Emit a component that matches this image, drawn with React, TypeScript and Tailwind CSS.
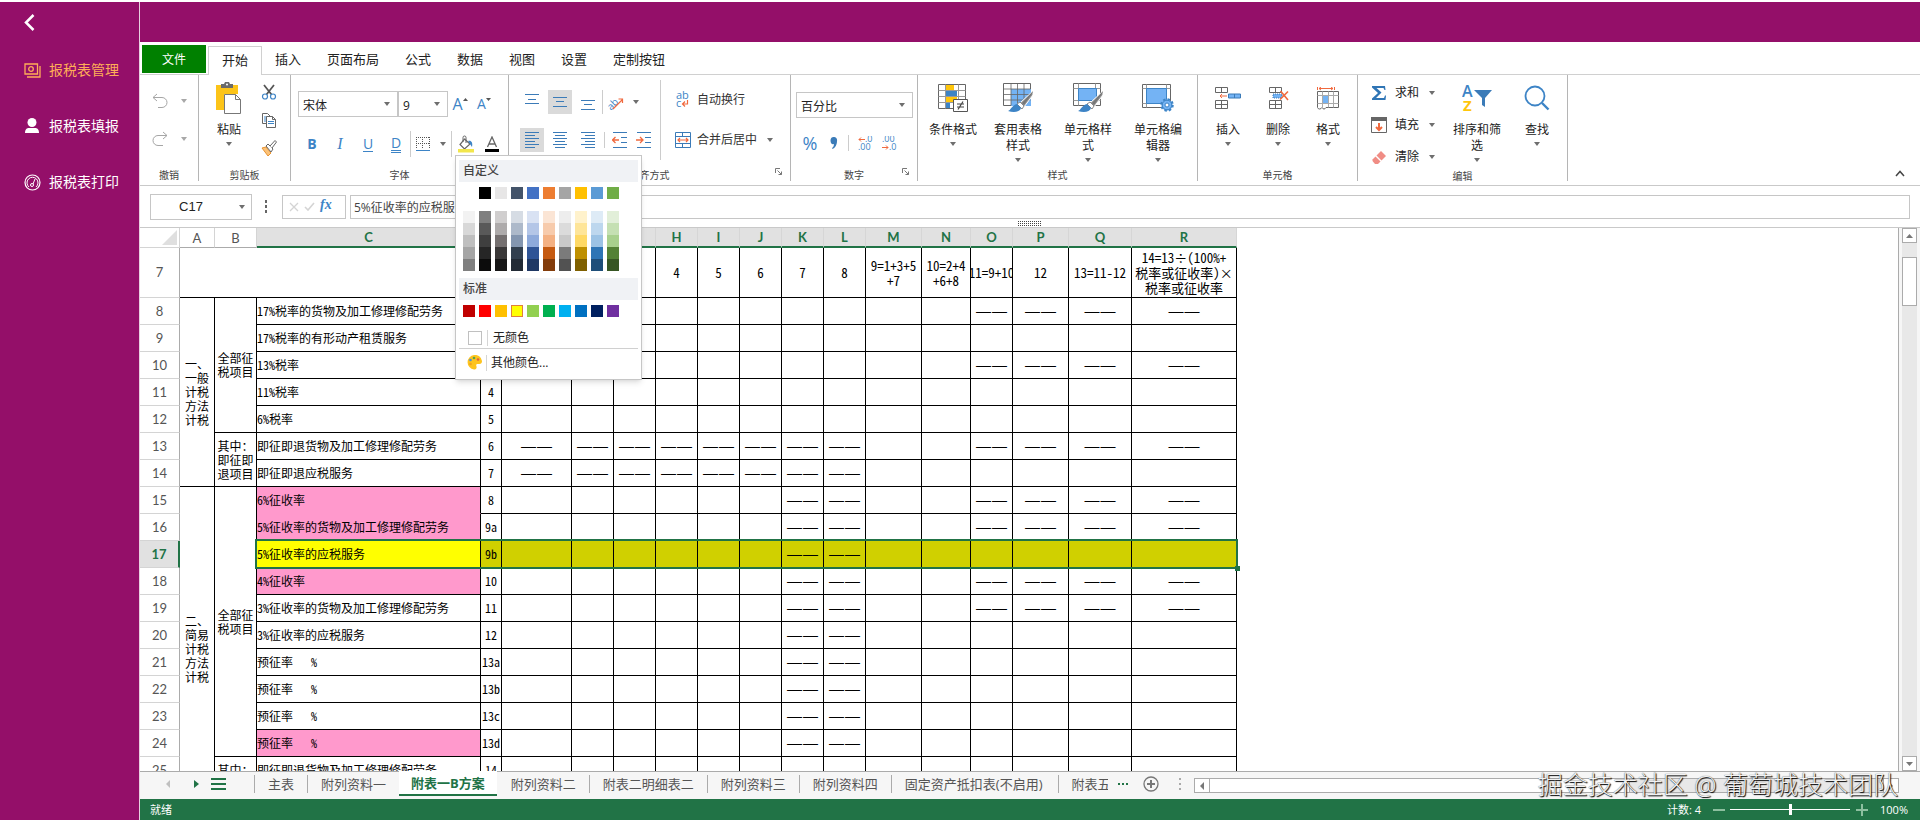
import React from 'react';
import clsx from 'clsx';

const THEME = ['#ffffff', '#000000', '#e7e6e6', '#44546a', '#4472c4', '#ed7d31', '#a5a5a5', '#ffc000', '#5b9bd5', '#70ad47'];

const TINTS = [
  ['#f2f2f2', '#7f7f7f', '#d0cece', '#d6dce4', '#d9e2f3', '#fbe5d5', '#ededed', '#fff2cc', '#deebf6', '#e2efd9'],
  ['#d8d8d8', '#595959', '#aeabab', '#adb9ca', '#b4c6e7', '#f7cbac', '#dbdbdb', '#fee599', '#bdd7ee', '#c5e0b3'],
  ['#bfbfbf', '#3f3f3f', '#757070', '#8496b0', '#8eaadb', '#f4b183', '#c9c9c9', '#ffd965', '#9cc3e5', '#a8d08d'],
  ['#a5a5a5', '#262626', '#3a3838', '#323f4f', '#2f5496', '#c55a11', '#7b7b7b', '#bf9000', '#2e75b5', '#538135'],
  ['#7f7f7f', '#0c0c0c', '#171616', '#222a35', '#1f3864', '#833c0b', '#525252', '#7f6000', '#1e4e79', '#375623'],
];

const STANDARD = ['#c00000', '#ff0000', '#ffc000', '#ffff00', '#92d050', '#00b050', '#00b0f0', '#0070c0', '#002060', '#7030a0'];

const COLUMNS = [
  { id: 'A', width: 35 },
  { id: 'B', width: 42 },
  { id: 'C', width: 224 },
  { id: 'D', width: 21 },
  { id: 'E', width: 70 },
  { id: 'F', width: 42 },
  { id: 'G', width: 42 },
  { id: 'H', width: 42 },
  { id: 'I', width: 42 },
  { id: 'J', width: 42 },
  { id: 'K', width: 42 },
  { id: 'L', width: 42 },
  { id: 'M', width: 56 },
  { id: 'N', width: 49 },
  { id: 'O', width: 42 },
  { id: 'P', width: 56 },
  { id: 'Q', width: 63 },
  { id: 'R', width: 105 },
];

const VALUE_COLUMNS = 'EFGHIJKLMNOPQR'.split('');

const FORMULAS = [
  ['1'], ['2'], ['3'], ['4'], ['5'], ['6'], ['7'], ['8'],
  ['9=1+3+5', '+7'],
  ['10=2+4', '+6+8'],
  ['11=9+10'],
  ['12'],
  ['13=11-12'],
  ['14=13÷(100%+', '税率或征收率)×', '税率或征收率'],
];

interface SheetRow {
  n: number;
  label: string;
  code: string;
  dashes: string;
  fill?: 'pink' | 'open' | 'selected';
  a?: { lines: string[]; span: number };
  b?: { lines: string[]; span: number };
}

const ROWS: SheetRow[] = [
  {
    n: 8, label: '17%税率的货物及加工修理修配劳务', code: '1', dashes: 'OPQR',
    a: { lines: ['一、', '一般', '计税', '方法', '计税'], span: 7 },
    b: { lines: ['全部征', '税项目'], span: 5 },
  },
  { n: 9, label: '17%税率的有形动产租赁服务', code: '2', dashes: '' },
  { n: 10, label: '13%税率', code: '3', dashes: 'OPQR' },
  { n: 11, label: '11%税率', code: '4', dashes: '' },
  { n: 12, label: '6%税率', code: '5', dashes: '' },
  {
    n: 13, label: '即征即退货物及加工修理修配劳务', code: '6', dashes: 'EFGHIJKLOPQR',
    b: { lines: ['其中：', '即征即', '退项目'], span: 2 },
  },
  { n: 14, label: '即征即退应税服务', code: '7', dashes: 'EFGHIJKL' },
  {
    n: 15, label: '6%征收率', code: '8', dashes: 'KLOPQR', fill: 'open',
    a: { lines: ['二、', '简易', '计税', '方法', '计税'], span: 12 },
    b: { lines: ['全部征', '税项目'], span: 10 },
  },
  { n: 16, label: '5%征收率的货物及加工修理修配劳务', code: '9a', dashes: 'KLOPQR', fill: 'pink' },
  { n: 17, label: '5%征收率的应税服务', code: '9b', dashes: 'KL', fill: 'selected' },
  { n: 18, label: '4%征收率', code: '10', dashes: 'KLOPQR', fill: 'pink' },
  { n: 19, label: '3%征收率的货物及加工修理修配劳务', code: '11', dashes: 'KLOPQR' },
  { n: 20, label: '3%征收率的应税服务', code: '12', dashes: 'KL' },
  { n: 21, label: '预征率   %', code: '13a', dashes: 'KL' },
  { n: 22, label: '预征率   %', code: '13b', dashes: 'KL' },
  { n: 23, label: '预征率   %', code: '13c', dashes: 'KL' },
  { n: 24, label: '预征率   %', code: '13d', dashes: 'KL', fill: 'pink' },
  {
    n: 25, label: '即征即退货物及加工修理修配劳务', code: '14', dashes: 'EFGHIJKLOPQR',
    b: { lines: ['其中：', '即征即', '退项目'], span: 2 },
  },
  { n: 26, label: '即征即退应税服务', code: '15', dashes: 'EFGHIJKLOPQR' },
];

const SHEETS = ['主表', '附列资料一', '附表一B方案', '附列资料二', '附表二明细表二', '附列资料三', '附列资料四', '固定资产抵扣表(不启用)'];

const MENU_TABS = ['开始', '插入', '页面布局', '公式', '数据', '视图', '设置', '定制按钮'];

/* ---------- icons ---------- */

const Caret = ({ light = false }: { light?: boolean }) => (
  <svg width="6" height="4" viewBox="0 0 6 4" className="shrink-0">
    <path d="M0 0h6L3 4z" fill={light ? '#a8a8a8' : '#6e6e6e'} />
  </svg>
);

const UndoIcon = ({ flip = false }: { flip?: boolean }) => (
  <svg width="16" height="16" viewBox="0 0 16 16" fill="none" stroke="#a6a6a6">
    {flip ? (
      <path d="M11 1l4 3.500-4 3.500M15 4.500H6a5 5 0 0 0 0 10h5" />
    ) : (
      <path d="M5 1L1 4.500 5 8M1 4.500h9a5 5 0 0 1 0 10H6" />
    )}
  </svg>
);

const PasteIcon = () => (
  <svg width="26" height="32" viewBox="0 0 26 32">
    <path d="M0 3h22v9H8v16H0z" fill="#fcc419" />
    <path d="M5 2h3l1-2h4l1 2h3v4H5z" fill="#6b6b6b" />
    <circle cx="11" cy="2.500" r="1" fill="#fff" />
    <path d="M8.500 12.500h11l5 5v14h-16z" fill="#fff" stroke="#777" />
    <path d="M19.500 12.500v5h5" fill="none" stroke="#777" />
  </svg>
);

const CutIcon = () => (
  <svg width="16" height="16" viewBox="0 0 16 16" fill="none">
    <path d="M3 1l7.500 9.500M13 1L5.500 10.500" stroke="#555" strokeWidth="1.800" />
    <circle cx="4" cy="12.500" r="2.500" stroke="#3d84c6" strokeWidth="1.200" />
    <circle cx="12" cy="12.500" r="2.500" stroke="#3d84c6" strokeWidth="1.200" />
  </svg>
);

const CopyIcon = () => (
  <svg width="16" height="16" viewBox="0 0 16 16">
    <path d="M1.500 1.500h5l3 3v7h-8z" fill="#fff" stroke="#666" />
    <path d="M3 5h3M3 7h2M3 9h2" stroke="#3d84c6" />
    <path d="M5.500 4.500h6l3 3v8h-9z" fill="#fff" stroke="#666" />
    <path d="M11.500 4.500v3h3" fill="none" stroke="#666" />
    <path d="M7 9.500h6M7 11.500h6" stroke="#3d84c6" />
  </svg>
);

const BrushIcon = () => (
  <svg width="16" height="16" viewBox="0 0 16 16">
    <path d="M1 8l4-1 5 6-3 3z" fill="#fbc27a" stroke="#e8932f" />
    <path d="M5 6l2-2 5 5-2 3z" fill="#fff" stroke="#666" />
    <path d="M9 6l5-5.500 1.500 1.500L11 8" fill="#fff" stroke="#666" />
  </svg>
);

const BordersIcon = () => (
  <svg width="14" height="14" viewBox="0 0 14 14">
    <path d="M0 .5h14M0 6.500h14M.5 0v12M6.500 0v12M13.500 0v12" stroke="#555" strokeDasharray="1 1" fill="none" />
    <path d="M0 13.500h14" stroke="#3d84c6" />
  </svg>
);

const FillIcon = () => (
  <svg width="16" height="18" viewBox="0 0 16 18">
    <path d="M6.500 4L12 9l-5.500 5L2 9.500z" fill="#fff" stroke="#666" strokeWidth="1.200" />
    <path d="M5 7V2.500a1.500 1.500 0 0 1 3 0V8" fill="none" stroke="#666" />
    <path d="M10 6c3-1 5 1 4 6l-2-3z" fill="#3d84c6" />
    <path d="M0 14h16v3.500H0z" fill="#f2e64b" />
  </svg>
);

const FontColorIcon = () => (
  <svg width="14" height="17" viewBox="0 0 14 17">
    <path d="M2.500 11L7 1l4.500 10M4 8h6" fill="none" stroke="#666" strokeWidth="1.300" />
    <path d="M0 13h14v3H0z" fill="#000" />
  </svg>
);

const LINES: Record<string, string> = {
  top: 'M0 .5h14M3 5.500h8M0 9.500h14',
  middle: 'M0 3.500h14M3 7.500h8M0 12.500h14',
  bottom: 'M0 6.500h14M3 10.500h8M0 15.500h14',
  left: 'M0 .5h14M0 3.500h10M0 6.500h14M0 9.500h10M0 12.500h14M0 15.500h10',
  center: 'M0 .5h14M2 3.500h10M0 6.500h14M2 9.500h10M0 12.500h14M2 15.500h10',
  right: 'M0 .5h14M4 3.500h10M0 6.500h14M4 9.500h10M0 12.500h14M4 15.500h10',
};

const LinesIcon = ({ kind }: { kind: string }) => (
  <svg width="14" height="16" viewBox="0 0 14 16">
    <path d={LINES[kind]} stroke="#3b7bb8" fill="none" />
  </svg>
);

const IndentIcon = ({ inward = false }: { inward?: boolean }) => (
  <svg width="15" height="16" viewBox="0 0 15 16" fill="none">
    <path d="M1 .5h14M9 5.500h6M9 10.500h6M1 15.500h14" stroke="#3b7bb8" />
    <path d={inward ? 'M0 8h6M4 5l3 3-3 3' : 'M1 8h6M3.500 5L.5 8l3 3'} stroke="#f0693e" strokeWidth="1.300" />
  </svg>
);

const OrientationIcon = () => (
  <svg width="16" height="16" viewBox="0 0 16 16">
    <text x="-2" y="13" fontSize="10" fill="#3d84c6" fontFamily="Open Sans, sans-serif" transform="rotate(-45 5 9)">ab</text>
    <path d="M5 15L14.500 5.500M10.500 5h4v4" stroke="#f0693e" fill="none" strokeWidth="1.200" />
  </svg>
);

const WrapIcon = () => (
  <svg width="16" height="18" viewBox="0 0 16 18">
    <text x="1" y="8" fontSize="11" fill="#3d84c6" fontFamily="Open Sans, sans-serif">ab</text>
    <text x="1" y="16" fontSize="11" fill="#3d84c6" fontFamily="Open Sans, sans-serif">c</text>
    <path d="M12.500 9v4H8M10 10.500L7.500 13l2.500 2.500" stroke="#f0693e" fill="none" strokeWidth="1.200" />
  </svg>
);

const MergeIcon = () => (
  <svg width="16" height="16" viewBox="0 0 16 16" fill="none">
    <path d="M.5 .5h15v15H.5zM.5 4.500h15M.5 11.500h15M7.500 .5v4M7.500 11.500v4" stroke="#3b7bb8" />
    <path d="M3 8h10M5 6L3 8l2 2M11 6l2 2-2 2" stroke="#f0693e" strokeWidth="1.200" />
  </svg>
);

const DecimalIcon = ({ less = false }: { less?: boolean }) => (
  <svg width="15" height="15" viewBox="0 0 15 15" fontSize="9" fontFamily="Open Sans, sans-serif" fill="#3d84c6">
    <text x={less ? 0 : 7} y="6">{less ? '.00' : '.0'}</text>
    <text x={less ? 7 : 0} y="14">{less ? '.0' : '.00'}</text>
    <path
      d={less ? 'M0 11.500h6M4 9.500l2 2-2 2' : 'M1 3.500h6M3 1.500l-2 2 2 2'}
      stroke="#f0693e"
      fill="none"
    />
  </svg>
);

const ConditionalIcon = () => (
  <svg width="30" height="30" viewBox="0 0 30 30">
    <path d="M.5 1.500h27v24H.5z" fill="#fff" stroke="#666" />
    <path d="M.5 7.500h27M.5 13.500h27M.5 19.500h27M7.500 1.500v24M20.500 1.500v24" stroke="#999" />
    <path d="M8 2h8v5H8zM8 14h11v5H8z" fill="#ffc60b" />
    <path d="M8 8h11v5H8zM8 20h4v5H8z" fill="#3d84c6" />
    <path d="M15.500 16.500h14v12h-14z" fill="#fff" stroke="#555" />
    <path d="M19 21h7M19 24h7M25 18.500l-5 8" stroke="#444" strokeWidth="1.200" />
  </svg>
);

const PaintBrush = () => (
  <>
    <path d="M30 8L17 20l4 4 9-12z" fill="#999" stroke="#fff" />
    <path d="M30 8L19 20l2 2 8-11z" fill="#777" />
    <path d="M17 19l4 4-2 3-5-5z" fill="#fff" stroke="#888" />
    <path d="M14 21l4 4c-1 4-7 5-13 3 3-1 4-6 9-7z" fill="#3d84c6" />
  </>
);

const TableStyleIcon = () => (
  <svg width="30" height="30" viewBox="0 0 30 30">
    <path d="M.5 .5h27v22H.5z" fill="#fff" stroke="#666" />
    <path d="M8 6h20v17H8z" fill="#74b3f4" />
    <path d="M.5 6h27M.5 11.500h27M.5 17h27M8 .5v22M14.500 .5v22M21 .5v22" stroke="#666" strokeWidth=".8" />
    <PaintBrush />
  </svg>
);

const CellStyleIcon = () => (
  <svg width="30" height="30" viewBox="0 0 30 30">
    <path d="M.5 .5h27v22H.5z" fill="#fff" stroke="#666" />
    <path d="M.5 5.500h27M.5 17.500h27M5.500 .5v22M22.500 .5v22" stroke="#999" />
    <path d="M5.500 5.500h18v12h-18z" fill="#74b3f4" stroke="#3d84c6" />
    <PaintBrush />
  </svg>
);

const CellEditorIcon = () => (
  <svg width="32" height="30" viewBox="0 0 32 30">
    <path d="M.5 1.500h28v23H.5z" fill="#fff" stroke="#666" />
    <path d="M.5 5.500h28M.5 20.500h28M4.500 1.500v23M24.500 1.500v23" stroke="#999" />
    <path d="M4.500 5.500h20v15h-20z" fill="#74b3f4" stroke="#3d84c6" />
    <circle cx="25" cy="22" r="5.500" fill="#74b3f4" stroke="#3d84c6" strokeWidth="2.500" strokeDasharray="2.300 2" />
    <circle cx="25" cy="22" r="4.800" fill="#74b3f4" stroke="#3d84c6" />
    <circle cx="25" cy="22" r="2" fill="#fff" stroke="#3d84c6" />
  </svg>
);

const InsertCellIcon = () => (
  <svg width="26" height="22" viewBox="0 0 26 22" fill="none">
    <path d="M.5 .5h12v5H.5zM6.500 .5v5M.5 13.500h12v8H.5zM.5 17.500h12M6.500 13.500v8" stroke="#666" />
    <path d="M13.500 7h12v4h-12z" fill="#74b3f4" stroke="#3b7bb8" />
    <path d="M19.500 7v4" stroke="#3b7bb8" />
    <path d="M12 9H5M7 7L5 9l2 2" stroke="#f0693e" />
  </svg>
);

const DeleteCellIcon = () => (
  <svg width="21" height="22" viewBox="0 0 21 22" fill="none">
    <path d="M1.500 .5h12v5h-12zM7.500 .5v5M1.500 13.500h12v8h-12zM1.500 17.500h12M7.500 13.500v8" stroke="#666" />
    <path d="M5 7h9v4H5z" fill="#74b3f4" stroke="#3b7bb8" strokeDasharray="1 1" />
    <path d="M12.500 4l7.500 9M20 4.500L12 12.500" stroke="#f0693e" strokeWidth="1.600" />
  </svg>
);

const FormatCellIcon = () => (
  <svg width="22" height="23" viewBox="0 0 22 23" fill="none">
    <path d="M2 1.500h14M4 0L2 1.500 4 3M14 0l2 1.500L14 3M.5 0v3M17.500 0v3" stroke="#f0693e" />
    <path d="M.5 4.500h21v16H9c-1 2-3 2-4 0-1 2-4 2-4.500 0z" fill="#fff" stroke="#666" />
    <path d="M.5 8.500h21M.5 16.500h21M5.500 4.500v16M11.500 4.500v16M16.500 4.500v16" stroke="#aaa" />
    <path d="M6 9h5v7H6z" fill="#74b3f4" />
  </svg>
);

const SigmaIcon = () => (
  <svg width="14" height="14" viewBox="0 0 14 14">
    <path d="M0 0h13l.5 4h-1l-1-2H4.500l5 4.500L4 12h8l1-2.500h1L13.500 14H0v-1.500L6 7 0 1.500z" fill="#2f75b5" />
  </svg>
);

const FillDownIcon = () => (
  <svg width="16" height="16" viewBox="0 0 16 16">
    <path d="M.5 .5h15v15H.5z" fill="#fff" stroke="#666" />
    <path d="M0 0h16v4H0z" fill="#666" />
    <path d="M8 6v7M5 10l3 3 3-3" stroke="#f0693e" strokeWidth="2" fill="none" />
  </svg>
);

const EraserIcon = () => (
  <svg width="15" height="15" viewBox="0 0 15 15" fill="#f08d85">
    <path d="M9 1l5 5-4.500 4.500-5-5z" />
    <path d="M3.500 6.500l5 5L6 14H3L.5 11V9.500z" />
  </svg>
);

const SortFilterIcon = () => (
  <svg width="30" height="28" viewBox="0 0 30 28">
    <text x="0" y="13" fontSize="16" fontFamily="Open Sans, sans-serif" fontWeight="600" fill="#3d84c6">A</text>
    <text x="1" y="27" fontSize="15" fontFamily="Open Sans, sans-serif" fontWeight="700" fill="#ffc60b">Z</text>
    <path d="M12 6h18l-7 8v9l-3-2v-7z" fill="#3b7bb8" />
  </svg>
);

const FindIcon = () => (
  <svg width="26" height="26" viewBox="0 0 26 26" fill="none" stroke="#3d84c6">
    <circle cx="11" cy="11" r="9.500" strokeWidth="1.800" />
    <path d="M18 18l6.500 6.500" strokeWidth="2.400" />
  </svg>
);

const LauncherIcon = () => (
  <svg width="7" height="7" viewBox="0 0 7 7" fill="none" stroke="#777">
    <path d="M.5 5V.5H5M2.500 2.500l4 4M6.500 3.500v3h-3" />
  </svg>
);

const PaletteIcon = () => (
  <svg width="15" height="15" viewBox="0 0 15 15">
    <path d="M7 0a7 7 0 0 1 8 6c0 3-2 3-4 3s-2 1-1.500 2.500S9 15 7 14.500A7.300 7.300 0 0 1 7 0z" fill="#fdc41f" />
    <circle cx="3.500" cy="5" r="1.300" fill="#4a90d9" />
    <circle cx="7" cy="3" r="1.300" fill="#59a14f" />
    <circle cx="11" cy="4.500" r="1.300" fill="#e3623b" />
    <circle cx="3.500" cy="9" r="1.300" fill="#f0a51e" />
  </svg>
);

/* ---------- sidebar ---------- */

const Sidebar = () => (
  <nav className="w-[140px] shrink-0 border-r border-[#e8cfe0] bg-[#940f69] text-sm text-white">
    <button aria-label="返回" className="ml-6 mt-3 block">
      <svg width="11" height="17" viewBox="0 0 11 17" fill="none" stroke="#fff" strokeWidth="2.500">
        <path d="M9.500 1l-7.500 7.500 7.500 7.500" />
      </svg>
    </button>
    <ul className="mt-[25px]">
      <li>
        <a href="#manage" className="flex h-7 items-center gap-2 pl-6 text-[#ffae57]">
          <svg width="17" height="15" viewBox="0 0 17 15" fill="none" stroke="currentColor" strokeWidth="1.300">
            <path d="M1 1h12.500v10H1zM3 14h13V3" />
            <circle cx="7" cy="6" r="2.300" />
          </svg>
          报税表管理
        </a>
      </li>
      <li className="mt-7">
        <a href="#fill" className="flex h-7 items-center gap-2 pl-6">
          <svg width="17" height="16" viewBox="0 0 17 16" fill="currentColor">
            <circle cx="8" cy="4.500" r="4.500" />
            <path d="M1 15c0-4 2-5 4-5h6c2 0 4 1 4 5z" />
          </svg>
          报税表填报
        </a>
      </li>
      <li className="mt-7">
        <a href="#print" className="flex h-7 items-center gap-2 pl-6">
          <svg width="17" height="17" viewBox="0 0 17 17" fill="none" stroke="currentColor">
            <circle cx="8.500" cy="8.500" r="7.500" strokeWidth="1.200" />
            <path d="M5 13a5.500 5.500 0 1 1 7 0" />
            <circle cx="8" cy="11" r="1.500" />
            <path d="M9 10l2-5" />
          </svg>
          报税表打印
        </a>
      </li>
    </ul>
  </nav>
);

/* ---------- ribbon ---------- */

interface GroupProps {
  title: string;
  launcher?: boolean;
  className: string;
  children: React.ReactNode;
}

const Group: React.FC<GroupProps> = ({ title, launcher, className, children }) => (
  <section className={clsx('flex h-[106px] shrink-0 flex-col border-r border-[#b5b5b5]', className)}>
    <div className="flex flex-1">{children}</div>
    <div className="relative h-[13px] text-center text-[10px] leading-[15px] text-[#444]">
      {title}
      {launcher && (
        <button aria-label={`${title}设置`} className="absolute right-2 top-0">
          <LauncherIcon />
        </button>
      )}
    </div>
  </section>
);

interface BigButtonProps {
  icon: React.ReactNode;
  label: string;
  className: string;
}

const BigButton: React.FC<BigButtonProps> = ({ icon, label, className }) => (
  <button className={clsx('flex flex-col items-center self-start pt-[7px]', className)}>
    <span className="flex h-8 items-center">{icon}</span>
    <span className="mb-1 mt-2 max-w-12 text-xs leading-4">{label}</span>
    <Caret />
  </button>
);

interface SelectBoxProps {
  label: string;
  value: string;
  className: string;
}

const SelectBox: React.FC<SelectBoxProps> = ({ label, value, className }) => (
  <div className={clsx('relative h-[26px] border border-[#c6c6c6] text-[#222]', className)}>
    <select aria-label={label} className="h-full w-full appearance-none bg-transparent pl-1 text-xs outline-none">
      <option>{value}</option>
    </select>
    <span className="pointer-events-none absolute inset-y-0 right-[7px] flex items-center">
      <Caret />
    </span>
  </div>
);

interface IconButtonProps {
  label: string;
  className: string;
  children: React.ReactNode;
}

const IconButton: React.FC<IconButtonProps> = ({ label, className, children }) => (
  <button aria-label={label} className={clsx('flex h-6 items-center justify-center', className)}>
    {children}
  </button>
);

const Swatches = ({ colors }: { colors: string[] }) => (
  <div className="flex gap-1 pl-1">
    {colors.map((color) => (
      <button
        key={color}
        aria-label={color}
        className={clsx('size-3', color === '#ffff00' && 'border border-[#e0803c]')}
        style={{ backgroundColor: color }}
      />
    ))}
  </div>
);

const ColorMenu = () => (
  <div className="absolute left-[3px] top-6 z-30 w-[187px] border border-[#c6c6c6] bg-white px-[3px] pb-1 pt-1 font-['Open_Sans','Noto_Sans_CJK_SC',sans-serif] text-xs text-[#222] shadow-md">
    <h4 className="h-[22px] bg-[#f0f2f5] pl-1 font-medium leading-[22px] text-[#444]">自定义</h4>
    <div className="mt-[5px]">
      <Swatches colors={THEME} />
    </div>
    <div className="mt-3">
      {TINTS.map((row) => (
        <Swatches key={row[0]} colors={row} />
      ))}
    </div>
    <h4 className="mt-[7px] h-[22px] bg-[#f0f2f5] pl-1 font-medium leading-[22px] text-[#444]">标准</h4>
    <div className="mt-[5px]">
      <Swatches colors={STANDARD} />
    </div>
    <button className="mt-2 flex h-6 w-full items-center border-b border-[#d0d0d0] pl-[9px] pt-0.5">
      <span className="size-[14px] border border-[#c0c0c0] bg-white" />
      <span className="mx-[5px] h-4 w-px bg-[#d5d5d5]" />
      无颜色
    </button>
    <button className="flex h-[26px] w-full items-center pl-2 pt-px">
      <PaletteIcon />
      <span className="mx-1 h-4 w-px bg-[#d5d5d5]" />
      其他颜色...
    </button>
  </div>
);

const Ribbon = () => (
  <div className="flex h-[111px] shrink-0 border-b border-[#c9c9c9]">
    <Group title="撤销" className="w-[59px]">
      <div className="flex flex-col gap-[14px] pl-3 pt-[14px]">
        <div className="flex items-center gap-[13px]">
          <IconButton label="撤销" className="w-4"><UndoIcon /></IconButton>
          <Caret light />
        </div>
        <div className="flex items-center gap-[13px]">
          <IconButton label="重做" className="w-4"><UndoIcon flip /></IconButton>
          <Caret light />
        </div>
      </div>
    </Group>

    <Group title="剪贴板" className="w-[92px]">
      <BigButton icon={<PasteIcon />} label="粘贴" className="ml-1.5 w-12" />
      <div className="ml-2 flex flex-col gap-1 pt-[5px]">
        <IconButton label="剪切" className="w-4"><CutIcon /></IconButton>
        <IconButton label="复制" className="w-4"><CopyIcon /></IconButton>
        <IconButton label="格式刷" className="w-4"><BrushIcon /></IconButton>
      </div>
    </Group>

    <Group title="字体" className="w-[218px]">
      <div className="pl-[7px] pt-4">
        <div className="flex items-center text-[#3d84c6]">
          <SelectBox label="字体" value="宋体" className="w-[100px]" />
          <SelectBox label="字号" value="9" className="w-[50px]" />
          <button aria-label="增大字号" className="flex w-6 justify-center font-['Open_Sans'] text-base leading-6">
            A
            <svg width="5" height="3" viewBox="0 0 5 3" className="mt-1.5"><path d="M0 3h5L2.500 0z" fill="#555" /></svg>
          </button>
          <button aria-label="减小字号" className="flex w-6 justify-center font-['Open_Sans'] text-sm leading-6">
            A
            <svg width="5" height="3" viewBox="0 0 5 3" className="mt-1.5"><path d="M0 0h5L2.500 3z" fill="#555" /></svg>
          </button>
        </div>
        <div className="mt-[14px] flex h-[26px] items-center font-['Open_Sans'] text-sm text-[#3d84c6]">
          <IconButton label="加粗" className="w-7"><b>B</b></IconButton>
          <IconButton label="倾斜" className="w-7 font-['Liberation_Serif'] text-base"><i>I</i></IconButton>
          <IconButton label="下划线" className="w-7"><span className="border-b border-current leading-[14px]">U</span></IconButton>
          <IconButton label="双下划线" className="w-7"><span className="border-b-3 border-double border-current leading-[14px]">D</span></IconButton>
          <span className="h-[26px] w-px bg-[#ccc]" />
          <IconButton label="边框" className="w-6"><BordersIcon /></IconButton>
          <IconButton label="边框选项" className="w-4"><Caret /></IconButton>
          <div className="relative flex h-[26px] items-center border-l border-[#ccc]">
            <IconButton label="填充颜色" className="w-7"><FillIcon /></IconButton>
            <ColorMenu />
          </div>
          <IconButton label="字体颜色" className="w-6"><FontColorIcon /></IconButton>
        </div>
      </div>
    </Group>

    <Group title="对齐方式" launcher className="w-[282px]">
      <div className="flex w-[151px] flex-col gap-[14px] pl-[11px] pt-[15px]">
        <div className="flex items-center">
          <IconButton label="顶端对齐" className="w-6"><LinesIcon kind="top" /></IconButton>
          <IconButton label="垂直居中" className="mx-1 w-6 bg-[#dadada]"><LinesIcon kind="middle" /></IconButton>
          <IconButton label="底端对齐" className="w-6"><LinesIcon kind="bottom" /></IconButton>
          <span className="ml-0.5 h-6 w-px bg-[#ccc]" />
          <IconButton label="方向" className="w-[26px]"><OrientationIcon /></IconButton>
          <IconButton label="方向选项" className="w-[14px]"><Caret /></IconButton>
        </div>
        <div className="flex items-center">
          <IconButton label="左对齐" className="w-6 bg-[#dadada]"><LinesIcon kind="left" /></IconButton>
          <IconButton label="居中" className="mx-1 w-6"><LinesIcon kind="center" /></IconButton>
          <IconButton label="右对齐" className="w-6"><LinesIcon kind="right" /></IconButton>
          <span className="ml-1 mr-0.5 h-4 w-px bg-[#ccc]" />
          <IconButton label="减少缩进" className="w-6"><IndentIcon /></IconButton>
          <IconButton label="增加缩进" className="w-6"><IndentIcon inward /></IconButton>
        </div>
      </div>
      <span className="mt-[5px] h-20 w-px bg-[#ccc]" />
      <div className="flex flex-col gap-4 pl-[14px] pt-[13px] text-xs text-[#333]">
        <button className="flex h-6 items-center gap-1.5"><WrapIcon />自动换行</button>
        <button className="flex h-6 items-center gap-1.5">
          <MergeIcon />合并后居中
          <span className="ml-1"><Caret /></span>
        </button>
      </div>
    </Group>

    <Group title="数字" launcher className="w-[127px]">
      <div className="pl-[5px] pt-[17px]">
        <SelectBox label="数字格式" value="百分比" className="w-[117px]" />
        <div className="mt-[13px] flex items-center text-[#3d84c6]">
          <IconButton label="百分比样式" className="w-7 font-['Open_Sans'] text-lg">%</IconButton>
          <IconButton label="千位分隔" className="w-5">
            <svg width="8" height="12" viewBox="0 0 8 12">
              <path d="M3.500 0a3.300 3.300 0 0 1 3.500 4c0 4-2 7-4.500 8L2 11c1.500-1 2-2.500 2-4-2 1-3.500-1-3.500-3.500S2 0 3.500 0z" fill="#3b7bb8" />
            </svg>
          </IconButton>
          <span className="mx-1 h-4 w-px bg-[#ccc]" />
          <IconButton label="增加小数位" className="w-6"><DecimalIcon /></IconButton>
          <IconButton label="减少小数位" className="w-6"><DecimalIcon less /></IconButton>
        </div>
      </div>
    </Group>

    <Group title="样式" className="w-[280px]">
      <BigButton icon={<ConditionalIcon />} label="条件格式" className="ml-[5px] w-[60px]" />
      <BigButton icon={<TableStyleIcon />} label="套用表格样式" className="w-[70px]" />
      <BigButton icon={<CellStyleIcon />} label="单元格样式" className="w-[70px]" />
      <BigButton icon={<CellEditorIcon />} label="单元格编辑器" className="w-[70px]" />
    </Group>

    <Group title="单元格" className="w-40">
      <BigButton icon={<InsertCellIcon />} label="插入" className="ml-[5px] w-[50px]" />
      <BigButton icon={<DeleteCellIcon />} label="删除" className="w-[50px]" />
      <BigButton icon={<FormatCellIcon />} label="格式" className="w-[50px]" />
    </Group>

    <Group title="编辑" className="w-[210px]">
      <div className="mr-[7px] flex flex-col gap-2 pl-[13px] pt-1.5 text-xs">
        {[
          { label: '求和', icon: <SigmaIcon /> },
          { label: '填充', icon: <FillDownIcon /> },
          { label: '清除', icon: <EraserIcon /> },
        ].map(({ label, icon }) => (
          <button key={label} className="flex h-6 items-center">
            <span className="mr-2 flex w-4 justify-center">{icon}</span>
            {label}
            <span className="ml-[10px]"><Caret /></span>
          </button>
        ))}
      </div>
      <BigButton icon={<SortFilterIcon />} label="排序和筛选" className="w-[70px]" />
      <BigButton icon={<FindIcon />} label="查找" className="w-[50px]" />
    </Group>

    <button aria-label="折叠功能区" className="mb-2 ml-auto mr-[15px] self-end">
      <svg width="10" height="7" viewBox="0 0 10 7" fill="none" stroke="#444" strokeWidth="1.500">
        <path d="M1 6l4-4.500L9 6" />
      </svg>
    </button>
  </div>
);

const MenuBar = () => (
  <div className="flex h-[33px] shrink-0 items-end border-b border-[#d0d0d0] pl-0.5 text-[13px]">
    <button className="mb-px h-7 w-16 bg-[#008000] pt-0.5 text-xs text-white">文件</button>
    <div className="ml-0.5 flex">
      {MENU_TABS.map((tab, i) => (
        <button
          key={tab}
          className={clsx('h-7 px-[13px] pb-0.5 leading-5', i === 0 && '-mb-px h-[29px] border border-b-0 border-[#d0d0d0] bg-white px-3')}
        >
          {tab}
        </button>
      ))}
    </div>
  </div>
);

const FormulaBar = () => (
  <div className="relative flex h-[42px] shrink-0 items-center border-b border-[#c9c9c9] pl-[10px] pr-[10px]">
    <div className="flex h-[26px] w-[102px] items-center border border-[#c6c6c6]">
      <input
        aria-label="名称框"
        defaultValue="C17"
        className="h-full w-20 bg-transparent text-center font-['Liberation_Sans',sans-serif] text-[13px] outline-none"
      />
      <button aria-label="名称列表" className="flex-1 pl-2"><Caret /></button>
    </div>
    <svg width="30" height="14" viewBox="0 0 30 14" fill="#666">
      <path d="M13 0h2v3h-2zM13 5h2v3h-2zM13 10h2v3h-2z" />
    </svg>
    <div className="flex h-6 w-16 items-center gap-[5px] border border-[#c6c6c6] pl-1.5">
      <button aria-label="取消">
        <svg width="10" height="10" viewBox="0 0 10 10" stroke="#d4d4d4" strokeWidth="1.300"><path d="M1 1l8 8M9 1L1 9" /></svg>
      </button>
      <button aria-label="输入">
        <svg width="11" height="9" viewBox="0 0 11 9" fill="none" stroke="#d4d4d4" strokeWidth="1.600"><path d="M1 5l3 3 6-7" /></svg>
      </button>
      <button aria-label="插入函数" className="pb-1 font-['Liberation_Serif',serif] text-sm font-bold italic leading-5 text-[#3d84c6]">
        fx
      </button>
    </div>
    <input
      aria-label="编辑栏"
      defaultValue="5%征收率的应税服务"
      className="ml-1 h-6 flex-1 border border-[#c6c6c6] pl-[3px] text-xs text-[#444] outline-none"
    />
    <svg width="24" height="5" viewBox="0 0 24 5" className="absolute bottom-px left-1/2 -ml-3">
      <path d="M0 .5h24M0 2.500h24M0 4.500h24" stroke="#444" strokeDasharray="1 1" />
    </svg>
  </div>
);

/* ---------- sheet ---------- */

const Lines = ({ lines }: { lines: string[] }) => (
  <>
    {lines.map((line, i) => (
      <span key={i} className="block">{line}</span>
    ))}
  </>
);

const Dashes = () => (
  <span className="flex justify-center gap-px font-['Liberation_Sans',sans-serif] text-[15px] leading-4">
    <span>—</span>
    <span>—</span>
  </span>
);

const Grid = () => (
  <div className="relative min-w-0 flex-1 overflow-hidden border-r border-[#ababab]">
    <table className="w-[1097px] table-fixed border-separate border-spacing-0 text-center text-xs leading-[14px] text-black [font-feature-settings:'hwid']">
      <colgroup>
        <col className="w-10" />
        {COLUMNS.map((col) => (
          <col key={col.id} style={{ width: col.width }} />
        ))}
      </colgroup>
      <thead className="font-['Lato'] text-[13px] leading-[18px] [font-feature-settings:normal]">
        <tr className="h-5">
          <th className="border-b border-r border-[#d4d4d4] p-0">
            <svg width="15" height="15" viewBox="0 0 15 15" className="ml-auto mr-0.5"><path d="M15 0v15H0z" fill="#dfdfdf" /></svg>
          </th>
          {COLUMNS.map((col, i) => (
            <th
              key={col.id}
              scope="col"
              className={clsx(
                'p-0',
                i < 2 && 'border-b border-r border-b-[#ababab] border-r-[#d4d4d4] font-normal text-[#555]',
                i >= 2 && 'border-b-2 border-r border-b-[#217346] border-r-[#d6d6d6] bg-[#e1e1e1] font-bold text-[#217346]',
              )}
            >
              {col.id}
            </th>
          ))}
        </tr>
      </thead>
      <tbody>
        <tr className="h-[50px] text-[13px] leading-[15px]">
          <th scope="row" className="border-b border-r border-b-[#d4d4d4] border-r-[#ababab] p-0 font-['Lato'] font-normal text-[#555] [font-feature-settings:normal]">
            7
          </th>
          <td colSpan={3} className="border-b border-r border-black p-0" />
          <td className="border-b border-r border-black p-0" />
          {FORMULAS.map((lines, i) => (
            <td key={i} className="border-b border-r border-black p-0">
              <div className="flex flex-col items-center overflow-hidden whitespace-nowrap">
                <Lines lines={lines} />
              </div>
            </td>
          ))}
        </tr>
        {ROWS.map((row) => {
          const selected = row.fill === 'selected';
          return (
            <tr key={row.n} className="h-[27px]">
              <th
                scope="row"
                className={clsx(
                  "border-b border-b-[#d4d4d4] p-0 font-['Lato'] text-[13px] [font-feature-settings:normal]",
                  selected ? 'border-r-2 border-r-[#217346] bg-[#e1e1e1] font-bold text-[#217346]' : 'border-r border-r-[#ababab] font-normal text-[#555]',
                )}
              >
                {row.n}
              </th>
              {row.a && (
                <td rowSpan={row.a.span} className="border-b border-r border-black p-0">
                  <Lines lines={row.a.lines} />
                </td>
              )}
              {row.b && (
                <td rowSpan={row.b.span} className="border-b border-r border-black p-0">
                  <Lines lines={row.b.lines} />
                </td>
              )}
              <td
                className={clsx(
                  'whitespace-pre border-b border-r border-black p-0 text-left',
                  (row.fill === 'pink' || row.fill === 'open') && 'bg-[#ff99cc]',
                  row.fill === 'open' && 'border-b-[#ff99cc]',
                  selected && 'bg-[#ffff00]',
                )}
              >
                {row.label}
              </td>
              <td className={clsx('border-b border-r border-black p-0', selected && 'bg-[#d0d000]')}>{row.code}</td>
              {VALUE_COLUMNS.map((id) => (
                <td key={id} className={clsx('border-b border-r border-black p-0', selected && 'bg-[#d0d000]')}>
                  {row.dashes.includes(id) && <Dashes />}
                </td>
              ))}
            </tr>
          );
        })}
      </tbody>
    </table>
    {/* selection frame over row 17 */}
    <div className="pointer-events-none absolute left-[115px] top-[311px] h-[30px] w-[983px] border-2 border-[#217346]">
      <span className="absolute -bottom-1 -right-1 size-[5px] bg-[#217346]" />
    </div>
  </div>
);

const VerticalScroll = () => (
  <div className="flex w-[21px] flex-col bg-[#f6f6f6] pl-[3px] pr-[3px]">
    <button aria-label="向上滚动" className="flex h-[15px] items-center justify-center border border-[#ababab] bg-white">
      <svg width="7" height="4" viewBox="0 0 7 4"><path d="M0 4h7L3.500 0z" fill="#777" /></svg>
    </button>
    <div className="flex-1 bg-[#e8e8e8] pt-[14px]">
      <div className="h-[49px] border border-[#ababab] bg-white" />
    </div>
    <button aria-label="向下滚动" className="flex h-[15px] items-center justify-center border border-[#ababab] bg-white">
      <svg width="7" height="4" viewBox="0 0 7 4"><path d="M0 0h7L3.500 4z" fill="#777" /></svg>
    </button>
  </div>
);

const SheetTabs = () => (
  <div className="flex h-7 shrink-0 border-t border-[#ababab] bg-[#f6f6f6] pr-[21px] text-[13px] text-[#555]">
    <div className="flex h-6 w-[114px] shrink-0 items-center pl-[26px]">
      <button aria-label="上一张"><svg width="4" height="8" viewBox="0 0 4 8"><path d="M4 0v8L0 4z" fill="#c0c0c0" /></svg></button>
      <button aria-label="下一张" className="ml-6"><svg width="5" height="8" viewBox="0 0 5 8"><path d="M0 0v8l5-4z" fill="#217346" /></svg></button>
      <button aria-label="所有工作表" className="ml-3">
        <svg width="15" height="12" viewBox="0 0 15 12" stroke="#217346" strokeWidth="2"><path d="M0 1h15M0 6h15M0 11h15" /></svg>
      </button>
    </div>
    <div className="flex h-6 shrink-0 items-center">
      {SHEETS.map((name, i) =>
        i === 2 ? (
          <button key={name} className="-mt-px h-[25px] border-b-2 border-b-[#217346] bg-white px-3 font-bold leading-6 text-[#217346]">
            {name}
          </button>
        ) : (
          <button key={name} className={clsx('h-[18px] border-l px-[13px] leading-[18px]', i === 3 ? 'border-transparent' : 'border-[#ababab]')}>
            {name}
          </button>
        ),
      )}
      <button className="ml-0.5 h-[18px] w-[50px] overflow-hidden whitespace-nowrap border-l border-[#ababab] pl-[13px] text-left leading-[18px]">附表五</button>
      <button aria-label="更多工作表" className="ml-[10px]">
        <svg width="11" height="3" viewBox="0 0 11 3" fill="#217346"><path d="M0 0h2v2H0zM4 0h2v2H4zM8 0h2v2H8z" /></svg>
      </button>
      <button aria-label="新建工作表" className="ml-[14px]">
        <svg width="16" height="16" viewBox="0 0 16 16" fill="none" stroke="#777">
          <circle cx="8" cy="8" r="7" strokeWidth="1.300" />
          <path d="M8 4v8M4 8h8" strokeWidth="2" />
        </svg>
      </button>
      <svg width="3" height="12" viewBox="0 0 3 12" fill="#aaa" className="ml-5 mr-3">
        <path d="M0 0h2v2H0zM0 5h2v2H0zM0 10h2v2H0z" />
      </svg>
    </div>
    <div className="mt-1.5 flex h-[15px] flex-1 border border-[#ababab] bg-[#e8e8e8]">
      <button aria-label="向左滚动" className="flex w-[15px] items-center justify-center border-r border-[#ababab] bg-white">
        <svg width="4" height="8" viewBox="0 0 4 8"><path d="M4 0v8L0 4z" fill="#777" /></svg>
      </button>
      <div className="flex flex-1"><div className="w-5/8 border-r border-[#ababab] bg-white" /></div>
      <button aria-label="向右滚动" className="flex w-[15px] items-center justify-center border-l border-[#ababab] bg-white">
        <svg width="4" height="8" viewBox="0 0 4 8"><path d="M0 0v8l4-4z" fill="#777" /></svg>
      </button>
    </div>
  </div>
);

const StatusBar = () => (
  <footer className="flex h-[21px] shrink-0 items-center bg-[#217346] pl-[10px] pr-3 text-[11px] leading-none text-white">
    <span>就绪</span>
    <span className="ml-auto">计数: 4</span>
    <button aria-label="缩小" className="ml-3">
      <svg width="12" height="12" viewBox="0 0 12 12" stroke="#8dbf9f" strokeWidth="2"><path d="M0 6h12" /></svg>
    </button>
    <input
      type="range"
      aria-label="缩放"
      className="ml-[5px] mr-1.5 h-4 w-[120px] appearance-none bg-transparent [&::-webkit-slider-runnable-track]:h-px [&::-webkit-slider-runnable-track]:bg-white [&::-webkit-slider-thumb]:-mt-[5px] [&::-webkit-slider-thumb]:h-[11px] [&::-webkit-slider-thumb]:w-[3px] [&::-webkit-slider-thumb]:appearance-none [&::-webkit-slider-thumb]:bg-white"
    />
    <button aria-label="放大">
      <svg width="12" height="12" viewBox="0 0 12 12" stroke="#8dbf9f" strokeWidth="2"><path d="M0 6h12M6 0v12" /></svg>
    </button>
    <span className="ml-3">100%</span>
  </footer>
);

export default function App() {
  return (
    <div className="relative flex h-screen overflow-hidden bg-white pt-0.5 font-['Open_Sans','Noto_Sans_CJK_SC',sans-serif] text-[#222]">
      <Sidebar />
      <main className="flex min-w-0 flex-1 flex-col">
        <header className="h-10 shrink-0 bg-[#940f69]" />
        <MenuBar />
        <Ribbon />
        <FormulaBar />
        <div className="flex min-h-0 flex-1 font-['Noto_Sans_CJK_SC',sans-serif]">
          <Grid />
          <VerticalScroll />
        </div>
        <SheetTabs />
        <StatusBar />
      </main>
      <p className="pointer-events-none absolute bottom-[22px] right-[22px] whitespace-nowrap text-[25px] font-light leading-7 text-[#f2f2f2] [text-shadow:1px_1px_1px_#000,0_0_1px_#444]">
        掘金技术社区 @ 葡萄城技术团队
      </p>
    </div>
  );
}
